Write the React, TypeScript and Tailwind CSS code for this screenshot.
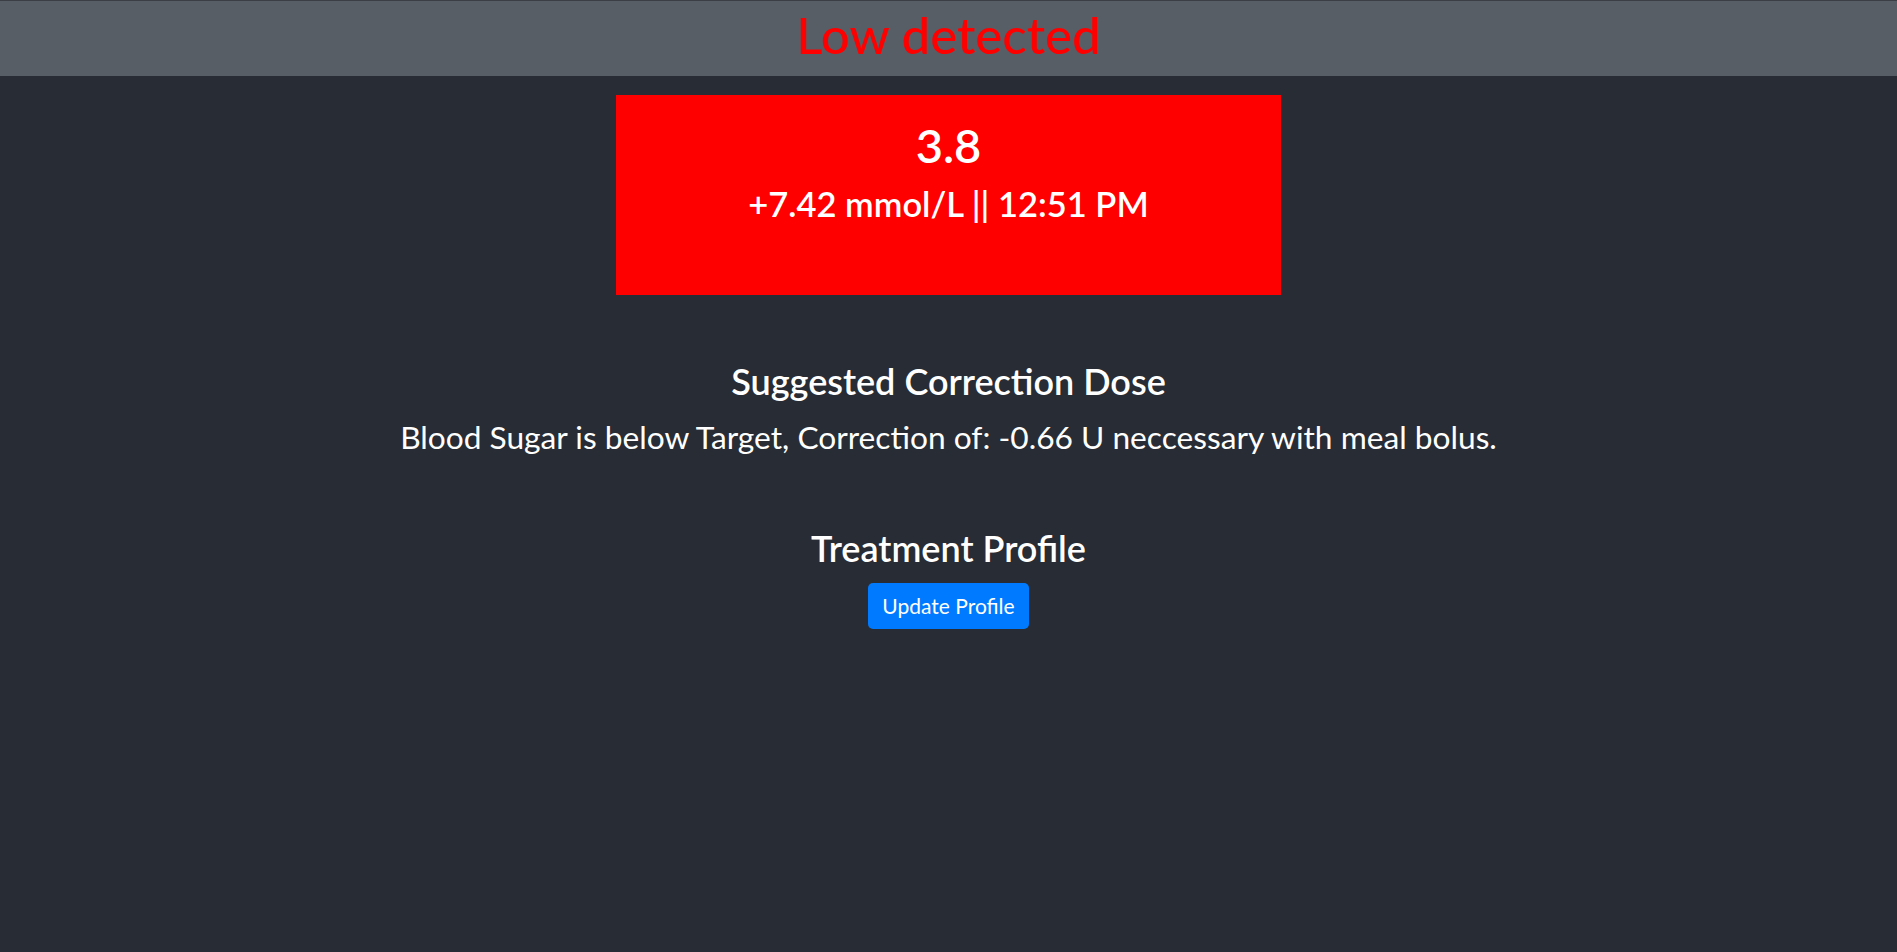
const font = "font-['Lato','Noto_Sans',sans-serif]"

export default function App() {
  return (
    <div className={`min-h-screen bg-[#282c34] text-white ${font}`}>
      <header className="h-[76px] border-t border-[#3b3f45] bg-[#575e66] text-center">
        <h1 className="text-[51px] leading-[67px] font-medium text-[#ff0000]">Low detected</h1>
      </header>

      <main className="flex flex-col items-center text-center">
        <div className="mt-[19px] h-[200px] w-[665px] bg-[#ff0000] pt-[22px]">
          <div className="text-[47px] leading-[56px] font-semibold">3.8</div>
          <div className="mt-[11px] text-[34.5px] leading-[40px] font-semibold">+7.42 mmol/L || 12:51 PM</div>
        </div>

        <h3 className="mt-[64px] text-[36px] leading-[44px] font-semibold">Suggested Correction Dose</h3>
        <p className="mt-[14px] text-[31.7px] leading-[40px]">
          Blood Sugar is below Target, Correction of: -0.66 U neccessary with meal bolus.
        </p>

        <h3 className="mt-[69px] text-[36px] leading-[44px] font-semibold">Treatment Profile</h3>
        <button
          type="button"
          className="mt-[13px] h-[46px] rounded-[5px] bg-[#007bff] px-[14px] text-[21px] text-white"
        >
          Update Profile
        </button>
      </main>
    </div>
  )
}
